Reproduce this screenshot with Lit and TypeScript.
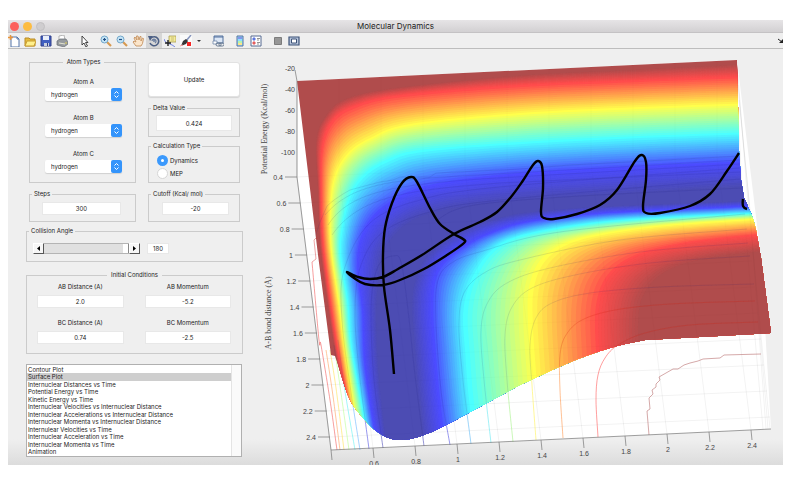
import { LitElement, html, css, svg } from "lit";
import { customElement, property, state } from "lit/decorators.js";

type Point = [number, number];
type Rgb = [number, number, number];

interface Level {
  color: Rgb;
  points: Point[];
}

const DARK_RED: Rgb = [176, 76, 76];
const RED: Rgb = [255, 76, 76];
const YELLOW: Rgb = [255, 255, 76];
const CYAN: Rgb = [76, 255, 255];
const BLUE: Rgb = [76, 76, 255];
const DARK_BLUE: Rgb = [76, 76, 180];

// Iso-energy lines of the repulsive wall, from the rim down to the valley
const OUTER: Level[] = [
  {
    color: DARK_RED,
    points: [[345, 400], [335, 352], [327, 300], [320, 245], [318, 190], [316, 140], [326, 115], [347, 98], [400, 87], [520, 75], [640, 69], [780, 62]],
  },
  {
    color: RED,
    points: [[350, 410], [338, 352], [330, 300], [323, 245], [321, 195], [322, 148], [332, 121], [354, 106], [402, 95], [520, 85], [640, 80], [780, 75]],
  },
  {
    color: YELLOW,
    points: [[357, 430], [345, 352], [338, 300], [331, 250], [330, 212], [334, 178], [347, 154], [370, 138], [410, 124], [520, 113], [640, 107], [780, 102]],
  },
  {
    color: CYAN,
    points: [[370, 450], [352, 352], [347, 300], [340, 255], [342, 225], [350, 194], [364, 174], [386, 160], [420, 150], [520, 142], [640, 136], [780, 131]],
  },
  {
    color: BLUE,
    points: [[379, 460], [365, 370], [362, 310], [357, 270], [360, 240], [371, 218], [388, 203], [410, 191], [445, 182], [520, 173], [640, 166], [780, 160]],
  },
  {
    color: DARK_BLUE,
    points: [[388, 460], [379, 380], [376, 320], [378, 282], [382, 255], [394, 235], [412, 220], [435, 212], [465, 206], [530, 199], [640, 192], [780, 184]],
  },
];

// The same levels climbing out of the valley onto the plateau
const INNER: Level[] = [
  {
    color: DARK_BLUE,
    points: [[426, 470], [418, 400], [413, 340], [411, 300], [417, 272], [430, 251], [450, 236], [475, 224], [520, 213], [590, 207], [660, 204], [800, 199]],
  },
  {
    color: BLUE,
    points: [[446, 470], [438, 400], [433, 345], [431, 305], [434, 277], [446, 259], [465, 245], [489, 233], [525, 222], [590, 214], [660, 210], [800, 204]],
  },
  {
    color: CYAN,
    points: [[478, 470], [469, 400], [465, 350], [463, 315], [468, 288], [478, 267], [491, 251], [510, 239], [545, 230], [600, 222], [670, 217], [800, 211]],
  },
  {
    color: YELLOW,
    points: [[542, 470], [534, 400], [530, 355], [528, 322], [528, 295], [533, 273], [543, 257], [560, 245], [588, 236], [638, 228], [690, 223], [800, 216]],
  },
  {
    color: RED,
    points: [[604, 470], [598, 400], [596, 350], [595, 320], [597, 300], [602, 284], [611, 271], [625, 260], [646, 251], [676, 244], [710, 239], [800, 230]],
  },
  {
    color: DARK_RED,
    points: [[648, 470], [642, 400], [639, 350], [638, 325], [640, 304], [646, 290], [655, 279], [668, 270], [686, 263], [708, 258], [735, 254], [800, 247]],
  },
];

const TRAJECTORY: Point[] = [
  [394, 374], [390, 330], [384, 287], [383, 255], [385, 228], [392, 203], [402, 183],
  [411, 177], [417, 182], [430, 208], [440, 224], [454, 234], [463, 239], [464, 243],
  [447, 255], [424, 269], [400, 280], [383, 285], [365, 284], [354, 278], [347, 272],
  [358, 277], [370, 279], [383, 277], [398, 269], [422, 255], [454, 234], [480, 222],
  [497, 212], [511, 197], [522, 182], [533, 165], [538, 161], [542, 166], [543, 188],
  [541, 212], [544, 218], [554, 219], [577, 214], [600, 205], [617, 190], [635, 161],
  [642, 155], [646, 162], [646, 180], [643, 206], [646, 213], [660, 213], [690, 206],
  [710, 194], [727, 171], [739, 153],
];

const FLOOR_LINES: { color: string; warm?: boolean; points: Point[] }[] = [
  { color: "#f05050", points: [[337, 450], [330, 400], [321, 345], [319, 340], [312, 262]] },
  { color: "#ff9a50", points: [[340, 450], [333, 396], [326, 350]] },
  { color: "#ffe04c", points: [[344, 450], [336, 388], [330, 350]] },
  { color: "#b4ff8c", points: [[349, 450], [340, 386], [334, 345]] },
  { color: "#5af0f0", points: [[355, 450], [344, 385], [338, 340]] },
  { color: "#60b0ff", points: [[360, 450], [350, 385], [342, 320], [344, 270], [370, 223], [420, 200], [500, 187], [740, 168]] },
  { color: "#4646e0", points: [[369, 449], [359, 370], [355, 310], [361, 265], [383, 232], [430, 212], [500, 200], [740, 179]] },
  { color: "#4040b4", points: [[383, 448], [374, 380], [371, 320], [373, 285], [380, 263], [393, 256], [401, 262], [408, 310], [415, 375], [424, 446]] },
  { color: "#4040b4", points: [[436, 221], [455, 210], [490, 203], [580, 196], [742, 188]] },
  { color: "#4646e0", points: [[450, 445], [441, 390], [436, 320], [438, 280], [453, 262], [483, 251], [560, 232], [745, 214]] },
  { color: "#50b4f4", points: [[471, 444], [463, 380], [459, 325], [464, 293], [484, 273], [520, 260], [620, 240], [747, 229]] },
  { color: "#5ae6f0", points: [[491, 443], [484, 380], [481, 330], [488, 302], [507, 283], [550, 268], [640, 252], [748, 243]] },
  { color: "#a0f082", points: [[513, 442], [507, 380], [505, 335], [512, 307], [532, 288], [575, 275], [650, 263], [750, 256]] },
  { color: "#fff04c", points: [[536, 440], [532, 385], [530, 345], [536, 318], [552, 303], [590, 293], [660, 287], [754, 284]] },
  { color: "#ff9040", warm: true, points: [[563, 438], [560, 390], [560, 355], [566, 335], [582, 320], [615, 310], [670, 304], [755, 301]] },
  { color: "#ff5050", warm: true, points: [[598, 437], [596, 400], [598, 375], [605, 358], [618, 345], [645, 333], [690, 325], [758, 322]] },
];

const ENERGY_TICKS = ["-20", "-40", "-60", "-80", "-100"];
const AB_TICKS = ["0.4", "0.6", "0.8", "1", "1.2", "1.4", "1.6", "1.8", "2", "2.2", "2.4"];
const BC_TICKS = ["", "0.6", "0.8", "1", "1.2", "1.4", "1.6", "1.8", "2", "2.2", "2.4"];

const STEPS = 14;

/** Catmull-Rom spline through the points, written as cubic beziers. */
function smooth(points: Point[]) {
  let d = `M${points[0][0]} ${points[0][1]}`;
  for (let i = 0; i < points.length - 1; i++) {
    const p0 = points[i - 1] ?? points[i];
    const p1 = points[i];
    const p2 = points[i + 1];
    const p3 = points[i + 2] ?? p2;
    const c = [
      p1[0] + (p2[0] - p0[0]) / 6,
      p1[1] + (p2[1] - p0[1]) / 6,
      p2[0] - (p3[0] - p1[0]) / 6,
      p2[1] - (p3[1] - p1[1]) / 6,
    ].map((n) => n.toFixed(1));
    d += `C${c[0]} ${c[1]} ${c[2]} ${c[3]} ${p2[0].toFixed(1)} ${p2[1].toFixed(1)}`;
  }
  return d;
}

const mix = (a: number, b: number, t: number) => a + (b - a) * t;

/** Every level covers what lies below and right of it, so painting in order gives the ramp. */
function bands(levels: Level[]) {
  const out: { d: string; fill: string }[] = [];
  for (let i = 0; i < levels.length - 1; i++) {
    const from = levels[i];
    const to = levels[i + 1];
    for (let s = 1; s <= STEPS; s++) {
      const t = s / STEPS;
      const points = from.points.map(
        (p, n): Point => [mix(p[0], to.points[n][0], t), mix(p[1], to.points[n][1], t)]
      );
      const rgb = from.color.map((c, n) => Math.round(mix(c, to.color[n], t)));
      out.push({ d: `${smooth(points)}L820 500L${points[0][0].toFixed(1)} 500Z`, fill: `rgb(${rgb.join(",")})` });
    }
  }
  return out;
}

const SURFACE = [...bands(OUTER), ...bands(INNER)];

@customElement("surface-plot")
class SurfacePlot extends LitElement {
  static styles = css`
    :host {
      display: block;
      min-width: 0;
    }
    svg {
      display: block;
      width: 100%;
      height: 100%;
    }
    .tick {
      font: 7px "Liberation Sans", Arial, sans-serif;
      fill: #444;
    }
    .axis-name {
      font: 8px "Liberation Serif", serif;
      fill: #444;
      text-anchor: middle;
    }
    .end {
      text-anchor: end;
    }
    .middle {
      text-anchor: middle;
    }
    .axis {
      stroke: #777;
      stroke-width: 0.7;
      fill: none;
    }
    .grid {
      stroke: #000;
      stroke-width: 0.7;
      fill: none;
      opacity: 0.08;
    }
    .veil {
      opacity: 0.3;
    }
    .floor {
      fill: none;
      stroke-width: 0.8;
      stroke-opacity: 0.7;
    }
    .over {
      fill: none;
      stroke: #20207a;
      stroke-width: 0.6;
      stroke-opacity: 0.2;
    }
    .warm {
      stroke: #d02010;
      stroke-opacity: 0.4;
    }
    .path {
      fill: none;
      stroke: #000;
      stroke-width: 2.4;
      stroke-linejoin: round;
    }
  `;

  private _grid() {
    return svg`
      ${BC_TICKS.map((_, i) => svg`<path class="grid" d="M${331 + i * 42} ${450 - i * 2}L${297 + i * 42} ${177 - i * 2}V${81 - i * 2}" />`)}
      ${AB_TICKS.map((_, i) => svg`<path class="grid" d="M${297 + i * 3.3} ${177 + i * 26}L${740 + i * 3} ${157 + i * 26}" />`)}
      <path class="grid" d="M738 75L746 180L770 429M738 85L748 190L768 429M739 100L750 210L766 429M738 110L742 190L763 429" />`;
  }

  private _axes() {
    return svg`
      <path class="axis" d="M295 70L297 81V177L331 450L771 429" />
      ${ENERGY_TICKS.map((label, i) => svg`
        <text class="tick end" x="295" y=${71 + i * 21}>${label}</text>`)}
      ${AB_TICKS.map((label, i) => {
        const x = 297 + i * 3.3;
        const y = 177 + i * 26;
        return svg`
          <path class="axis" d="M${x - 12} ${y}H${x}" />
          <text class="tick end" x=${x - 14} y=${y + 3}>${label}</text>`;
      })}
      ${BC_TICKS.map((label, i) => {
        const x = 331 + i * 42;
        const y = 450 - i * 2;
        return svg`
          <path class="axis" d="M${x} ${y}L${x + 1} ${y + 10}" />
          <text class="tick middle" x=${x + 1} y=${y + 18}>${label}</text>`;
      })}
      <text class="axis-name" transform="translate(267 129) rotate(-90)">Potential Energy (Kcal/mol)</text>
      <text class="axis-name" transform="translate(271 313) rotate(-90)">A-B bond distance (Å)</text>`;
  }

  render() {
    return html`
      <svg viewBox="244 49 539 416" role="img" aria-label="Potential energy surface">
        <defs>
          <clipPath id="sheet">
            <path
              d="M297 81L737 60L738 105L739 150L741 180L744 198C748 207 753 215 756 230L761 258L771 333L645 340
                C590 350 560 367 520 385L450 423C425 436 412 440 400 440C380 440 366 422 354 407C345 393 341 372 335 356L331 355L318 255Z"
            />
          </clipPath>
        </defs>
        <path fill="#fff" d="M297 81V177L331 450L771 429L761 258L737 60Z" />
        ${this._grid()}
        ${FLOOR_LINES.map((l) => svg`<path class="floor" stroke=${l.color} d=${smooth(l.points)} />`)}
        <path
          class="floor"
          stroke="#b46464"
          d="M649 435L647 411L650 409L649 398L653 394L652 390L656 387V384L660 380L659 377L673 369L678 369L684 365L690 363L698 361L703 359L720 358L724 355L761 354"
        />
        <path class="floor" stroke="#e06060" d="M312 262L316 259L314 240L318 236L327 206" />
        <g clip-path="url(#sheet)">
          <path fill="rgb(176,76,76)" d="M244 49H783V465H244Z" />
          ${SURFACE.map((b) => svg`<path d=${b.d} fill=${b.fill} />`)}
          ${FLOOR_LINES.map((l) => svg`<path class="over ${l.warm ? "warm" : ""}" d=${smooth(l.points)} />`)}
          <path class="over" d="M314 240L320 222L327 206L334 200L343 194L350 190L361 187L380 182L393 180L400 177L430 177L436 173L520 169L570 165L740 156" />
          <path class="over" d="M325 215C350 185 390 180 460 176L740 160M328 225C350 190 400 185 480 179L740 164M332 235C360 195 410 190 500 183L740 172" />
          <g class="veil">${this._grid()}</g>
        </g>
        <path class="path" d=${smooth(TRAJECTORY)} />
        <path class="path" d="M743 199C742 206 743 208 747 209" />
        ${this._axes()}
      </svg>
    `;
  }
}

const ICONS = {
  new: svg`<path d="M3 2h6l2 2v8H3z" fill="#fff" stroke="#5574a8" /><path d="M9 2v2h2" fill="none" stroke="#5574a8" /><path d="M2.500 0v5M0 2.500h5" stroke="#e8953c" stroke-width="1.500" />`,
  open: svg`<path d="M1 11V3h4l1 1h5v7z" fill="#e5bb3c" stroke="#b98a26" /><path d="M1 11l2-5h9l-2 5z" fill="#fff08c" stroke="#c79c31" />`,
  save: svg`<path d="M1 1h10v10H1z" fill="#405fc0" stroke="#303f88" /><path d="M3 1h6v4H3z" fill="#e9effa" /><path d="M4 8h5v3H4z" fill="#c8d0e0" /><path d="M7 8h1v3H7z" fill="#303f88" />`,
  print: svg`<path d="M3 1l5-1 1 5H3z" fill="#fff" stroke="#999" stroke-width=".7" /><path d="M1 6l3-2h6l2 3v2l-4 3-7-2z" fill="#969a9e" stroke="#696d72" stroke-width=".7" /><path d="M3 8l6 1" stroke="#e4e4d0" /><circle cx="10" cy="8" r=".8" fill="#e9d34c" />`,
  pointer: svg`<path d="M4 1v9l2-2 2 4 1.500-1-2-3.500H10z" fill="#fff" stroke="#333" stroke-width=".9" />`,
  zoomIn: svg`<path d="M7 7l4 4" stroke="#d79a50" stroke-width="2.200" /><circle cx="4.500" cy="4.500" r="3.500" fill="#c5e5f7" stroke="#73a7ca" /><path d="M3 4.500h3M4.500 3v3" stroke="#234f84" stroke-width="1.200" />`,
  zoomOut: svg`<path d="M7 7l4 4" stroke="#d79a50" stroke-width="2.200" /><circle cx="4.500" cy="4.500" r="3.500" fill="#c5e5f7" stroke="#73a7ca" /><path d="M3 4.500h3" stroke="#234f84" stroke-width="1.200" />`,
  pan: svg`<path d="M4 11L1 7l1-1 2 1-2-4 1-1 2 3-.5-4H6l1 4 1-3.500h1L9 6l1.500-3 1 .5-1 5L9 11z" fill="#fbe5ca" stroke="#c5915d" stroke-width=".9" />`,
  rotate: svg`<path d="M3 3a4.500 4.500 0 1 1-1 5" fill="none" stroke="#4c5f84" stroke-width="1.600" /><path d="M0 1h5L2 6z" fill="#4c5f84" /><path d="M4 6a2 2 0 1 1 3 2M5 6h2" fill="none" stroke="#6e80a0" stroke-width="1.300" />`,
  cursor: svg`<path d="M5 1h7v6H5z" fill="#f4ec9c" stroke="#aaa04e" stroke-width=".8" /><path d="M7 3h3M7 5h3" stroke="#b7ad65" stroke-width=".7" /><path d="M0 4c2 6 5 3 11 8" fill="none" stroke="#7185e4" /><path d="M4 5v6M1 8h6" stroke="#222" stroke-width="1.400" />`,
  brush: svg`<path d="M0 0h12v12H0z" fill="#fafafa" /><path d="M11 0L6 6" stroke="#8594bd" stroke-width="1.500" /><path d="M6 4L3 6l-2 5 5-2 2-3z" fill="#363636" /><path d="M0 11l3-1" stroke="#f3a0a0" /><path d="M7 7h4v4H7z" fill="#f52626" />`,
  link: svg`<path d="M2 1h9v7H2z" fill="#dce7f6" stroke="#53719d" /><path d="M2 2h9" stroke="#53719d" /><path d="M1 6h4v3H1z" fill="#fff" stroke="#7188aa" stroke-width=".8" /><rect x="4" y="8" width="5" height="3" rx="1.500" fill="none" stroke="#66788f" /><rect x="7" y="8" width="5" height="3" rx="1.500" fill="none" stroke="#66788f" />`,
  colorbar: svg`<path d="M3 1h6v10H3z" fill="#8fdfff" stroke="#58709e" /><path d="M4 2h4v2H4z" fill="#8295ec" /><path d="M4 6h4v2H4z" fill="#b7f4ac" /><path d="M4 8h4v2H4z" fill="#ffe28a" />`,
  legend: svg`<path d="M1 1h10v10H1z" fill="#fff" stroke="#576b91" /><path d="M3 3h2v2H3z" fill="#5d76df" stroke="#5d76df" /><path d="M3 7h2v2H3z" fill="#e45f5f" stroke="#e45f5f" /><path d="M7 3.500h3M7 5h2M7 7.500h3M7 9h2" stroke="#777" stroke-width=".8" />`,
  hide: svg`<path d="M2.500 2.500h7v7h-7z" fill="#969696" stroke="#7c7c7c" />`,
  show: svg`<path d="M1 2h10v8H1z" fill="#b9c6dc" stroke="#3d5378" stroke-width="1.200" /><path d="M3.500 4h5v4h-5z" fill="#fff" stroke="#3d5378" />`,
};

const TOOLBAR: { icon: keyof typeof ICONS; label: string }[][] = [
  [
    { icon: "new", label: "New figure" },
    { icon: "open", label: "Open file" },
    { icon: "save", label: "Save figure" },
    { icon: "print", label: "Print figure" },
  ],
  [{ icon: "pointer", label: "Edit plot" }],
  [
    { icon: "zoomIn", label: "Zoom in" },
    { icon: "zoomOut", label: "Zoom out" },
    { icon: "pan", label: "Pan" },
    { icon: "rotate", label: "Rotate 3D" },
    { icon: "cursor", label: "Data cursor" },
    { icon: "brush", label: "Brush" },
  ],
  [{ icon: "link", label: "Link plot" }],
  [
    { icon: "colorbar", label: "Insert colorbar" },
    { icon: "legend", label: "Insert legend" },
  ],
  [
    { icon: "hide", label: "Hide plot tools" },
    { icon: "show", label: "Show plot tools" },
  ],
];

@customElement("figure-toolbar")
class FigureToolbar extends LitElement {
  @property() active = "rotate";

  static styles = css`
    :host {
      display: flex;
      align-items: stretch;
      gap: 6px;
      height: 16px;
      box-sizing: border-box;
      background: #efefef;
      border-bottom: 1px solid #bdbdbd;
      overflow: hidden;
    }
    .group {
      display: flex;
    }
    .group:first-child {
      margin-left: -2px;
    }
    button {
      display: grid;
      place-items: center;
      width: 16px;
      padding: 0;
      border: 0;
      background: none;
    }
    .active {
      background: #d6d6d6;
    }
    .narrow {
      width: 10px;
    }
    .dock {
      width: 6px;
      margin-left: auto;
    }
    .icon {
      width: 12px;
      height: 12px;
    }
    .caret {
      width: 6px;
      height: 6px;
    }
  `;

  render() {
    return html`
      ${TOOLBAR.map(
        (group) => html`<div class="group">
          ${group.map(
            (tool) => html`<button
              class=${tool.icon === this.active ? "active" : ""}
              aria-label=${tool.label}
              @click=${() => (this.active = tool.icon)}
            >
              <svg class="icon" viewBox="0 0 12 12" fill="none">${ICONS[tool.icon]}</svg>
            </button>`
          )}
          ${group.some((tool) => tool.icon === "brush")
            ? html`<button class="narrow" aria-label="Brush options">
                <svg class="caret" viewBox="0 0 6 6"><path d="M1 2h4L3 4z" fill="#333" /></svg>
              </button>`
            : ""}
        </div>`
      )}
      <button class="dock" aria-label="Dock figure">
        <svg class="caret" viewBox="0 0 6 6"><path d="M1 1l4 3" stroke="#222" /><path d="M6 1v4H2z" fill="#222" /></svg>
      </button>
    `;
  }
}

const PLOTS = [
  "Contour Plot",
  "Surface Plot",
  "Internuclear Distances vs Time",
  "Potential Energy vs Time",
  "Kinetic Energy vs Time",
  "Internuclear Velocities vs Internuclear Distance",
  "Internuclear Accelerations vs Internuclear Distance",
  "Internuclear Momenta vs Internuclear Distance",
  "Internulear Velocities vs Time",
  "Internuclear Acceleration vs Time",
  "Internuclear Momenta vs Time",
  "Animation",
];

@customElement("app-root")
class AppRoot extends LitElement {
  @state() private _angle = 180;
  @state() private _plot = "Surface Plot";

  static styles = css`
    :host {
      display: block;
      padding: 20px 17px 0 8px;
      font: 6px/8px Inter, "Liberation Sans", sans-serif;
      color: #222;
      background: #fff;
    }
    * {
      box-sizing: border-box;
    }
    .window {
      background: linear-gradient(to top, #dcdcdc, #efefef 26px);
    }
    .titlebar {
      display: grid;
      grid-template-columns: 1fr auto 1fr;
      align-items: center;
      height: 13px;
      padding: 0 2px;
      background: linear-gradient(#e6e4e6, #d2d0d2);
      border-bottom: 1px solid #c4c2c4;
    }
    .lights {
      display: flex;
      gap: 4px;
    }
    .light {
      width: 9px;
      height: 9px;
      padding: 0;
      border: 0;
      border-radius: 50%;
    }
    .close {
      background: #fc605c;
    }
    .minimize {
      background: #fdbc40;
    }
    .zoom {
      background: #cfcdcf;
      border: 1px solid #c2c0c2;
    }
    .title {
      margin: 0;
      font-size: 8px;
      line-height: 12px;
      font-weight: 400;
    }
    .body {
      display: flex;
    }
    .side {
      flex: none;
      width: 236px;
      padding: 9px 1px 8px 18px;
    }
    surface-plot {
      flex: 1;
    }
    fieldset {
      min-width: 0;
      margin: 0;
      padding: 0;
      border: 1px solid #cbcbcb;
    }
    legend {
      margin-left: 2px;
      padding: 0 2px;
    }
    .centered {
      margin: 0 auto;
      padding: 0 4px;
    }
    .row {
      display: flex;
      gap: 12px;
      margin: 0 3px 7px;
    }
    .row > :first-child {
      flex: none;
      width: 107px;
    }
    .row > :last-child {
      flex: 1;
    }
    .row:nth-child(2) {
      margin-bottom: 5px;
    }
    .atoms {
      padding: 12px 13px 9px 15px;
    }
    .atom + .atom {
      margin-top: 13px;
    }
    .atom,
    .field {
      display: flex;
      flex-direction: column;
      gap: 2px;
      text-align: center;
    }
    .field {
      gap: 4px;
    }
    .picker {
      display: grid;
      align-items: center;
      background: #fff;
      border-radius: 2px;
      box-shadow: 0 1px 1px #d0d0d0;
    }
    .picker > * {
      grid-area: 1 / 1;
    }
    .picker select {
      appearance: none;
      height: 13px;
      padding: 0 14px 0 6px;
      border: 0;
      font: inherit;
      color: inherit;
      background: none;
    }
    .chevrons {
      justify-self: end;
      width: 11px;
      height: 13px;
      pointer-events: none;
    }
    .stack {
      display: flex;
      flex-direction: column;
      padding-top: 4px;
    }
    .update {
      height: 35px;
      margin-bottom: 7px;
      border: 1px solid #e2e2e2;
      border-radius: 3px;
      font: inherit;
      color: inherit;
      background: #fff;
      box-shadow: 0 1px 1px #d4d4d4;
    }
    input[type="text"] {
      display: block;
      width: 100%;
      height: 13px;
      padding: 0;
      border: 1px solid #e8e8e8;
      font: inherit;
      color: inherit;
      text-align: center;
      background: #fff;
    }
    .delta {
      margin-bottom: 5px;
    }
    .delta-content {
      padding: 3px 7px 5px;
    }
    .delta input[type="text"] {
      height: 16px;
    }
    .calc-content {
      padding: 4px 8px 2px;
    }
    .choice {
      display: flex;
      align-items: center;
      gap: 2px;
      height: 13px;
    }
    .choice input {
      appearance: none;
      width: 11px;
      height: 11px;
      margin: 0;
      border: 1px solid #d6d6d6;
      border-radius: 50%;
      background: #fff;
    }
    .choice input:checked {
      border: 4px solid #3b99fc;
    }
    .steps-content {
      padding: 4px 14px 6px 12px;
    }
    .cutoff-content {
      padding: 4px 10px 6px 13px;
    }
    .angle {
      margin-bottom: 9px;
      padding-bottom: 7px;
    }
    .angle-row {
      display: flex;
      align-items: center;
      gap: 7px;
      padding: 8px 6px 0;
    }
    .scroller {
      display: flex;
      width: 107px;
      height: 11px;
    }
    .scroller button {
      width: 11px;
      padding: 0;
      border: 1px solid;
      border-color: #fff #555 #555 #fff;
      background: #f6f6f6;
    }
    .scroller svg {
      display: block;
      width: 5px;
      height: 5px;
      margin: auto;
    }
    .scroller input {
      appearance: none;
      flex: 1;
      min-width: 0;
      margin: 0;
      background: #e0e0e0;
      border: solid #b4b4b4;
      border-width: 1px 0;
    }
    .scroller input::-webkit-slider-thumb {
      appearance: none;
      width: 6px;
      height: 9px;
      background: #fff;
      border-right: 1px solid #888;
    }
    .angle-row input[type="text"] {
      width: 22px;
      height: 11px;
    }
    .initial {
      margin-bottom: 10px;
    }
    .initial-grid {
      display: grid;
      grid-template-columns: 1fr 1fr;
      gap: 11px 21px;
      padding: 4px 11px 9px 10px;
    }
    .list {
      display: flex;
      margin-right: 1px;
      border: 1px solid #b0b0b0;
      background: #fff;
    }
    .plots {
      flex: 1;
      height: 91px;
      padding: 1px 0 0;
      border: 0;
      outline: 0;
      overflow: hidden;
      font: inherit;
      color: inherit;
      background: none;
    }
    .plots option {
      min-height: 0;
      height: 7px;
      padding: 0 1px;
      line-height: 7px;
      color: #222;
    }
    .plots option:nth-child(even) {
      height: 8px;
      line-height: 8px;
    }
    .plots option:checked {
      color: #222;
      background: #cecece linear-gradient(#cecece, #cecece);
    }
    .gutter {
      width: 10px;
      border-left: 1px solid #e4e4e4;
      background: #fafafa;
    }
  `;

  private _atom(letter: string) {
    return html`<div class="atom">
      <label for="atom-${letter}">Atom ${letter}</label>
      <span class="picker">
        <select id="atom-${letter}">
          <option>hydrogen</option>
        </select>
        <svg class="chevrons" viewBox="0 0 11 13">
          <rect width="11" height="13" rx="2" fill="#3494fb" />
          <path d="M3.500 5.500l2-2 2 2M3.500 7.500l2 2 2-2" fill="none" stroke="#fff" />
        </svg>
      </span>
    </div>`;
  }

  private _field(id: string, label: string, value: string) {
    return html`<div class="field">
      <label for=${id}>${label}</label>
      <input type="text" id=${id} .value=${value} />
    </div>`;
  }

  private _turn(delta: number) {
    this._angle = Math.max(0, Math.min(180, this._angle + delta));
  }

  render() {
    return html`
      <main class="window">
        <header class="titlebar">
          <div class="lights">
            <button class="light close" aria-label="Close"></button>
            <button class="light minimize" aria-label="Minimize"></button>
            <button class="light zoom" aria-label="Zoom"></button>
          </div>
          <h1 class="title">Molecular Dynamics</h1>
        </header>
        <figure-toolbar></figure-toolbar>
        <div class="body">
          <section class="side">
            <div class="row">
              <fieldset class="atoms">
                <legend class="centered">Atom Types</legend>
                ${["A", "B", "C"].map((letter) => this._atom(letter))}
              </fieldset>
              <div class="stack">
                <button class="update">Update</button>
                <fieldset class="delta">
                  <legend>Delta Value</legend>
                  <div class="delta-content">
                    <input type="text" aria-label="Delta Value" .value=${"0.424"} />
                  </div>
                </fieldset>
                <fieldset class="calc">
                  <legend>Calculation Type</legend>
                  <div class="calc-content">
                    <label class="choice"><input type="radio" name="calc" checked />Dynamics</label>
                    <label class="choice"><input type="radio" name="calc" />MEP</label>
                  </div>
                </fieldset>
              </div>
            </div>
            <div class="row">
              <fieldset>
                <legend>Steps</legend>
                <div class="steps-content">
                  <input type="text" aria-label="Steps" .value=${"300"} />
                </div>
              </fieldset>
              <fieldset>
                <legend>Cutoff (Kcal/ mol)</legend>
                <div class="cutoff-content">
                  <input type="text" aria-label="Cutoff (Kcal/ mol)" .value=${"-20"} />
                </div>
              </fieldset>
            </div>
            <fieldset class="angle">
              <legend>Collision Angle</legend>
              <div class="angle-row">
                <div class="scroller">
                  <button aria-label="Decrease angle" @click=${() => this._turn(-1)}>
                    <svg viewBox="0 0 5 5"><path d="M4 0v5L1 2.500z" /></svg>
                  </button>
                  <input
                    type="range"
                    aria-label="Collision Angle"
                    min="0"
                    max="180"
                    .value=${String(this._angle)}
                    @input=${(e: Event) => (this._angle = Number((e.target as HTMLInputElement).value))}
                  />
                  <button aria-label="Increase angle" @click=${() => this._turn(1)}>
                    <svg viewBox="0 0 5 5"><path d="M1 0v5l3-2.500z" /></svg>
                  </button>
                </div>
                <input type="text" aria-label="Collision Angle value" .value=${String(this._angle)} />
              </div>
            </fieldset>
            <fieldset class="initial">
              <legend class="centered">Initial Conditions</legend>
              <div class="initial-grid">
                ${this._field("ab-distance", "AB Distance (A)", "2.0")}
                ${this._field("ab-momentum", "AB Momentum", "-5.2")}
                ${this._field("bc-distance", "BC Distance (A)", "0.74")}
                ${this._field("bc-momentum", "BC Momentum", "-2.5")}
              </div>
            </fieldset>
            <div class="list">
              <select
                class="plots"
                size="12"
                aria-label="Plot"
                @change=${(e: Event) => (this._plot = (e.target as HTMLSelectElement).value)}
              >
                ${PLOTS.map((name) => html`<option ?selected=${name === this._plot}>${name}</option>`)}
              </select>
              <span class="gutter"></span>
            </div>
          </section>
          <surface-plot></surface-plot>
        </div>
      </main>
    `;
  }
}
